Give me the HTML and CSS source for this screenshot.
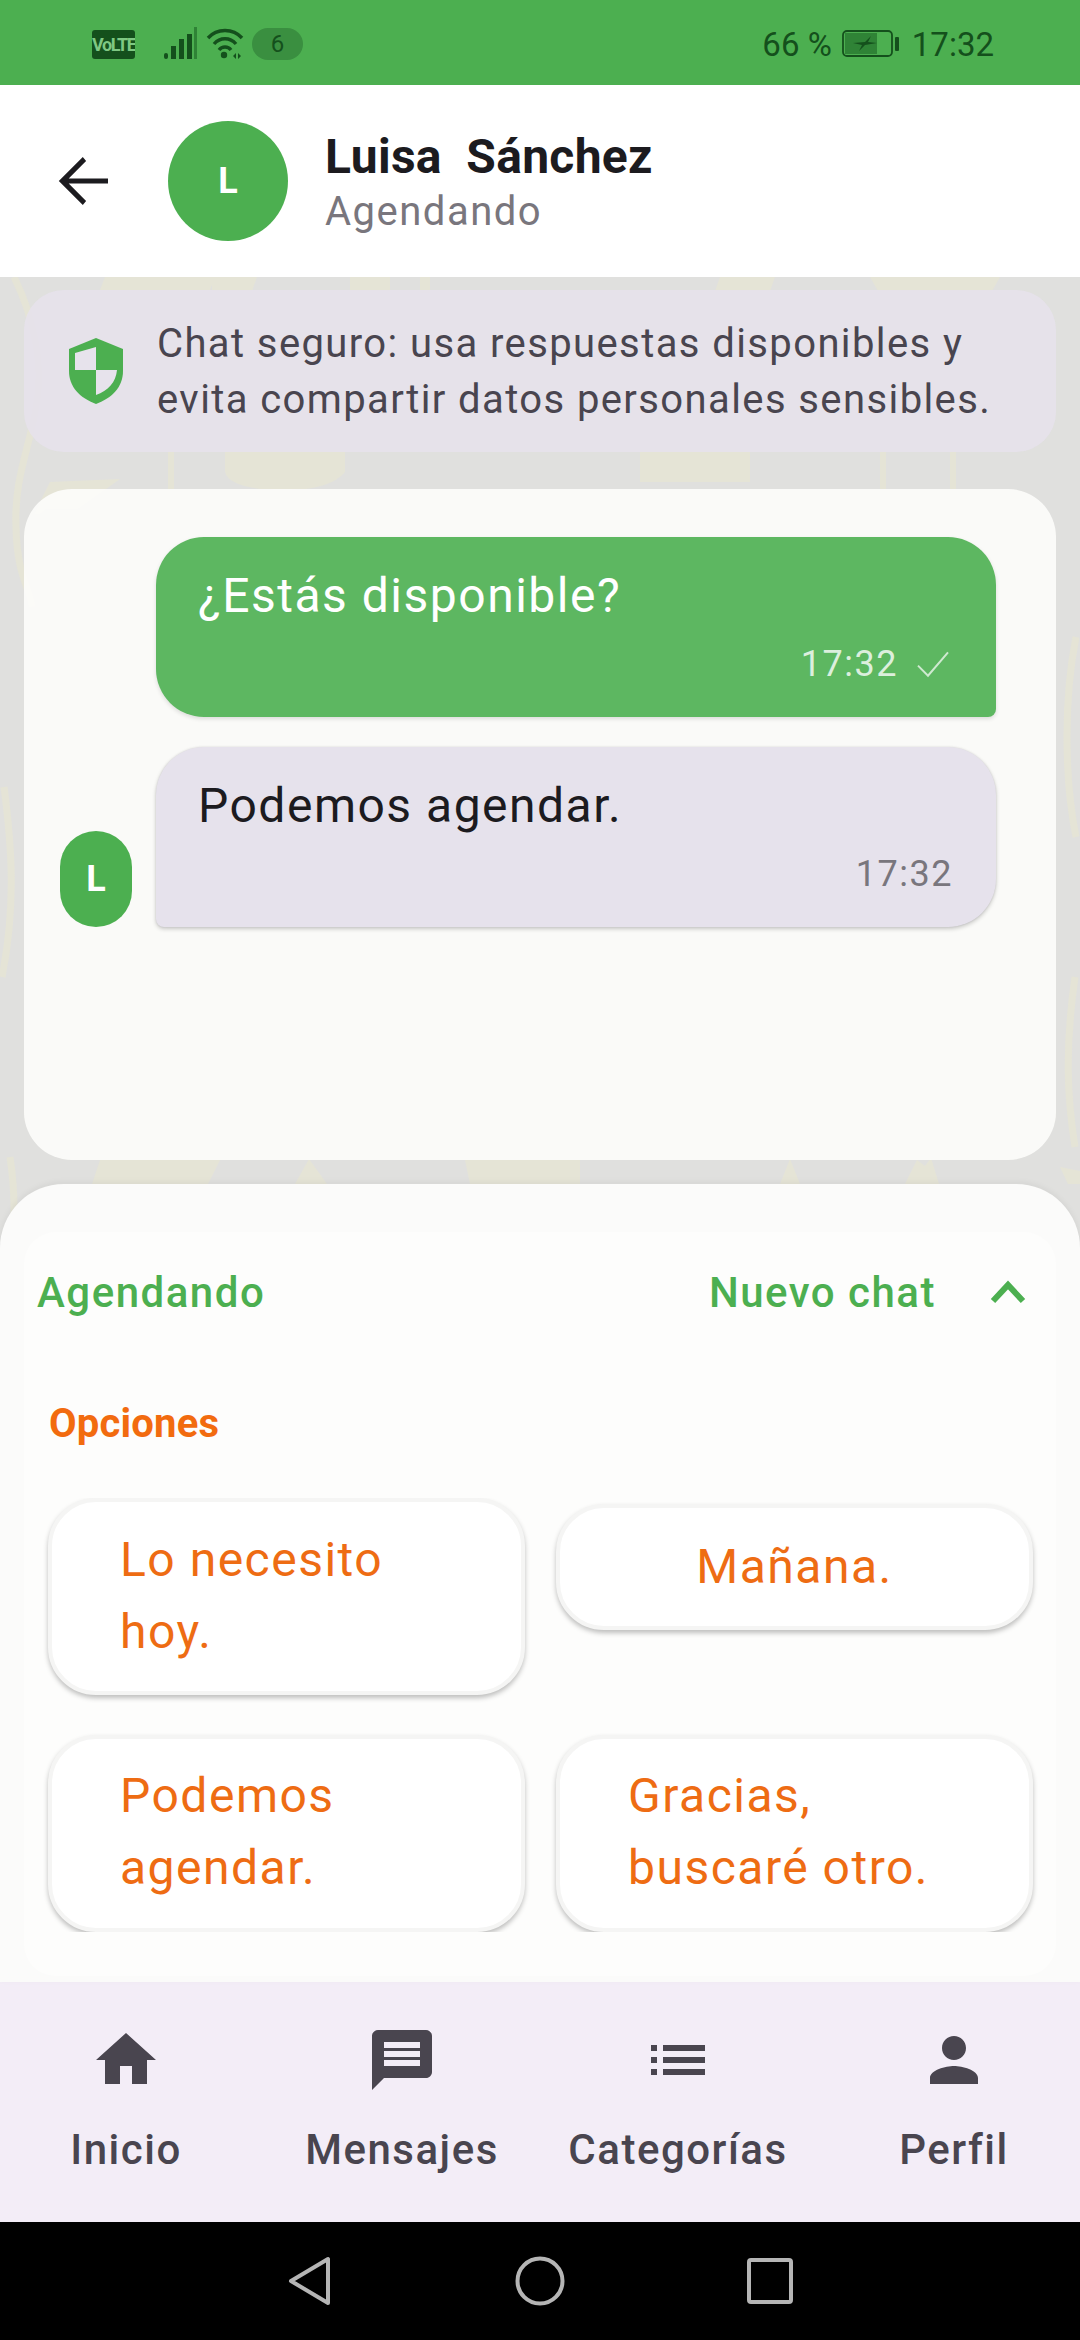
FILE: index.html
```html
<!DOCTYPE html>
<html lang="es">
<head>
<meta charset="utf-8">
<title>Chat</title>
<link rel="stylesheet" href="styles.css">
</head>
<body>
<div class="screen">
  <div class="status">
    <div class="status-left">
      <span class="volte">VoLTE</span>
      <svg class="sig" viewBox="0 0 36 34" width="36" height="34"><g fill="#14501c"><rect x="1" y="26" width="4" height="6" rx="2"/><rect x="8" y="19" width="5" height="13"/><rect x="16" y="12" width="5" height="20"/><rect x="24" y="7" width="5" height="25"/></g><rect x="31" y="0" width="3" height="32" fill="#2f8336"/></svg>
      <svg class="wifi" viewBox="0 0 38 34" width="38" height="34"><g fill="none" stroke="#14501c" stroke-width="3.4"><path d="M2 11C11 1 27 1 36 11"/><path d="M8 17C14 10 24 10 30 17"/><path d="M13 23C16 19 22 19 25 23"/></g><circle cx="18" cy="28" r="3.2" fill="#14501c"/><path d="M27 29l3-3v6zM32 26l3 3-3 3z" fill="#14501c"/></svg>
      <span class="count">6</span>
    </div>
    <div class="status-right">
      <span>66 %</span>
      <svg class="batt" viewBox="0 0 58 28" width="58" height="28"><rect x="1" y="1" width="49" height="25" rx="4" fill="none" stroke="#14501c" stroke-width="1.8"/><rect x="3" y="3" width="32" height="21" fill="#2f8336"/><path d="M11 13l12-1 6-6-3 6 9 1-12 2-6 6 3-6z" fill="#14501c"/><rect x="53" y="7" width="4" height="14" rx="1" fill="#14501c"/></svg>
      <span>17:32</span>
    </div>
  </div>

  <header class="top">
    <svg class="back" viewBox="0 0 24 24" width="72" height="72"><path d="M20 11.200H6.900l5.800-5.900L11.600 4l-8 8 8 8 1.100-1.300-5.800-5.900H20z" fill="#1c1b1f"/></svg>
    <div class="avatar">L</div>
    <div class="who">
      <div class="name">Luisa&nbsp; Sánchez</div>
      <div class="state">Agendando</div>
    </div>
  </header>

  <main class="main">
    <svg class="doodles" viewBox="0 0 1080 1705" width="1080" height="1705" aria-hidden="true">
      <g fill="#e5e4d6">
        <path d="M105 0h110l-5 13H100zM172 0h10v13h-10zM212 0h45l-5 14h-40zM350 0h40v14h-40zM420 0h10v16h-10z"/>
        <path d="M720 0h55l-5 14h-55zM1000 0h-130l8 14h114z"/>
        <path d="M50 205l70-3-42 30H46l-6 5h-6zM168 175h6v37h-6zM225 175h120v20c-10 12-30 18-60 18-45 0-60-10-60-20z"/>
        <path d="M640 175h110v30H640zM880 175h6v37h-6zM950 175h6v37h-6z"/>
        <path d="M100 883h120l-12 24H92zM295 907l14-25 18 25zM465 883h115v24H470zM780 907l10-25 10 25zM905 907l12-24 8 6 6-8 8 26zM1060 890l20 4v13h-12z"/>
      </g>
      <g fill="none" stroke="#e5e4d6" stroke-width="7">
        <path d="M14 0c20 40 30 90 22 130-6 40-22 70-20 120 1 50 14 60 16 80"/>
        <path d="M2 700c14-70 10-130 2-190M6 1000c10-40 10-80 4-120"/>
        <path d="M1076 360c-12 60-12 140 0 200M1075 700c-10 70-8 120 0 170"/>
      </g>
    </svg>

    <div class="notice">
      <svg class="shield" viewBox="0 0 56 66" width="56" height="66"><path d="M28 0l27 11v22c0 16-11 27-27 33C12 60 1 49 1 33V11z" fill="#4caf50"/><path d="M28 9v23H7V15zM28 32h21c-1 12-9 21-21 25z" fill="#e7e3ec"/></svg>
      <p class="notice-text">Chat seguro: usa respuestas disponibles y evita compartir datos personales sensibles.</p>
    </div>

    <section class="chat">
      <div class="bubble mine">
        <div class="msg">¿Estás disponible?</div>
        <div class="meta"><span>17:32</span><svg viewBox="0 0 24 24" width="40" height="40"><path d="M3 13l6 6L21 5" fill="none" stroke="#cfe9d0" stroke-width="1.2"/></svg></div>
      </div>
      <div class="row-in">
        <div class="mini">L</div>
        <div class="bubble theirs">
          <div class="msg">Podemos agendar.</div>
          <div class="meta"><span>17:32</span></div>
        </div>
      </div>
    </section>

    <section class="sheet">
      <div class="panel">
        <div class="panel-head">
          <span>Agendando</span>
          <span class="new">Nuevo chat</span>
          <svg class="chev" viewBox="0 0 36 24" width="36" height="24"><path d="M3 21L18 5l15 16" fill="none" stroke="#4caf50" stroke-width="6"/></svg>
        </div>
        <div class="opt-title">Opciones</div>
        <div class="options">
          <button class="opt">Lo necesito hoy.</button>
          <button class="opt short">Mañana.</button>
          <button class="opt">Podemos agendar.</button>
          <button class="opt">Gracias, buscaré otro.</button>
        </div>
      </div>
    </section>
  </main>

  <nav class="nav">
    <div class="tab">
      <svg viewBox="0 0 24 24" width="72" height="72"><path d="M10 20v-6h4v6h5v-8h3L12 3 2 12h3v8z" fill="#49454f"/></svg>
      <span>Inicio</span>
    </div>
    <div class="tab">
      <svg viewBox="0 0 24 24" width="72" height="72"><path d="M20 2H4c-1.100 0-2 .9-2 2v18l4-4h14c1.100 0 2-.9 2-2V4c0-1.100-.9-2-2-2zM18 14H6v-2h12zm0-3H6V9h12zm0-3H6V6h12z" fill="#49454f"/></svg>
      <span>Mensajes</span>
    </div>
    <div class="tab">
      <svg viewBox="0 0 24 24" width="72" height="72"><path d="M3 7h2v2H3zm0 4h2v2H3zm0 4h2v2H3zM7 7h14v2H7zm0 4h14v2H7zm0 4h14v2H7z" fill="#49454f"/></svg>
      <span>Categorías</span>
    </div>
    <div class="tab">
      <svg viewBox="0 0 24 24" width="72" height="72"><path d="M12 12c2.200 0 4-1.800 4-4s-1.800-4-4-4-4 1.800-4 4 1.800 4 4 4zm0 2c-2.700 0-8 1.300-8 4v2h16v-2c0-2.700-5.300-4-8-4z" fill="#49454f"/></svg>
      <span>Perfil</span>
    </div>
  </nav>

  <div class="sysbar">
    <svg viewBox="0 0 46 50" width="46" height="50"><path d="M41 3v44L4 25z" fill="none" stroke="#b5b5b5" stroke-width="4" stroke-linejoin="round"/></svg>
    <svg viewBox="0 0 50 50" width="50" height="50"><circle cx="25" cy="25" r="22.500" fill="none" stroke="#b5b5b5" stroke-width="4"/></svg>
    <svg viewBox="0 0 46 46" width="46" height="46"><rect x="2" y="2" width="42" height="42" rx="2" fill="none" stroke="#b5b5b5" stroke-width="4"/></svg>
  </div>
</div>
</body>
</html>
```
FILE: styles.css
```css
* { box-sizing: border-box; }
html, body { margin: 0; padding: 0; }
body { width: 1080px; height: 2340px; overflow: hidden; font-family: Roboto, "Noto Sans", sans-serif; }
.screen { width: 1080px; height: 2340px; display: flex; flex-direction: column; overflow: hidden; }

.status { height: 85px; flex: none; background: #4caf50; display: flex; justify-content: space-between; align-items: center; padding: 3px 86px 0 92px; color: #14501c; font-size: 33px; }
.status-left, .status-right { display: flex; align-items: center; }
.volte { width: 43px; height: 29px; background: #14501c; color: #7fc883; border-radius: 3px; font-size: 18px; font-weight: 700; line-height: 29px; text-align: center; letter-spacing: -1.4px; margin-right: 28px; white-space: nowrap; overflow: hidden; }
.sig { margin-right: 7px; }
.wifi { margin-right: 8px; }
.count { width: 51px; height: 32px; border-radius: 16px; background: #3a8f40; font-size: 24px; line-height: 32px; text-align: center; }
.batt { margin: 0 12px 0 10px; }

.top { height: 192px; flex: none; background: #fff; display: flex; align-items: center; padding-left: 48px; }
.back { margin-right: 48px; }
.avatar { width: 120px; height: 120px; border-radius: 50%; background: #4caf50; color: #fff; display: flex; align-items: center; justify-content: center; font-size: 36px; font-weight: 700; margin-right: 37px; }
.who { display: flex; flex-direction: column; margin-top: 6px; }
.name { font-size: 48px; font-weight: 700; line-height: 56px; letter-spacing: .3px; color: #1c1b1f; }
.state { font-size: 40px; line-height: 54px; color: #79767d; letter-spacing: 1.5px; }

.main { position: relative; flex: none; height: 1705px; background: #e0e0de; padding-top: 13px; display: flex; flex-direction: column; }
.doodles { position: absolute; left: 0; top: 0; }

.notice { position: relative; height: 162px; margin: 0 24px; border-radius: 40px; background: rgba(230, 225, 236, 0.88); display: flex; align-items: center; padding-left: 44px; gap: 33px; flex: none; }
.shield { flex: none; }
.notice-text { margin: 2px 0 0; width: 860px; font-size: 40px; line-height: 56px; letter-spacing: 1.4px; color: #49454f; }

.chat { position: relative; flex: none; height: 671px; margin: 37px 24px 0; border-radius: 48px; background: rgba(251, 251, 249, 0.97); padding: 48px 60px 0 36px; display: flex; flex-direction: column; align-items: flex-end; gap: 30px; }
.bubble { width: 840px; height: 180px; padding: 31px 43px 0 42px; display: flex; flex-direction: column; }
.mine { background: #5db761; color: #fff; border-radius: 48px 48px 8px 48px; box-shadow: 0 2px 4px rgba(0,0,0,.12); }
.theirs { background: #e6e2ec; color: #1c1b1f; border-radius: 48px 48px 48px 8px; box-shadow: 0 0 2px rgba(0,0,0,.1), 0 2px 4px rgba(0,0,0,.2); }
.msg { font-size: 48px; line-height: 56px; letter-spacing: 1.5px; }
.meta { margin-top: 18px; display: flex; justify-content: flex-end; align-items: center; gap: 15px; font-size: 36px; line-height: 44px; letter-spacing: 1.5px; }
.mine .meta { color: #dcefdd; }
.theirs .meta { color: #79767d; }
.row-in { display: flex; align-items: flex-end; gap: 24px; }
.mini { width: 72px; height: 96px; border-radius: 36px; background: #4caf50; color: #fff; font-size: 36px; font-weight: 700; display: flex; align-items: center; justify-content: center; }

.sheet { position: relative; flex: none; height: 798px; margin-top: 24px; border-radius: 64px 64px 0 0; background: #fbfbfa; padding: 48px 24px 6px; box-shadow: 0 -2px 6px rgba(0,0,0,.05); }
.panel { height: 744px; border-radius: 32px; background: #fdfdfc; display: flex; flex-direction: column; }
.panel-head { height: 120px; flex: none; display: flex; align-items: center; padding: 0 30px 0 13px; color: #4caf50; font-size: 42px; font-weight: 500; letter-spacing: 1.5px; }
.new { margin-left: auto; margin-right: 54px; }
.opt-title { flex: none; height: 60px; margin-top: 42px; padding-left: 25px; color: #f26b0f; font-size: 40px; font-weight: 700; line-height: 60px; letter-spacing: .2px; }
.options { margin-top: 44px; height: 434px; overflow: hidden; display: grid; grid-template-columns: 477px 477px; column-gap: 31px; row-gap: 39px; padding: 0 0 0 24px; align-items: start; }
.opt { border: 4px solid #f5f5f4; height: 197px; border-radius: 48px; background: #fff; padding: 0 68px 2px; text-align: left; font: 400 48px/72px Roboto, sans-serif; letter-spacing: 1.5px; color: #ee6c13; box-shadow: 0 3px 5px rgba(0,0,0,.25); }
.short { height: 126px; margin-top: 6px; text-align: center; padding: 0; }

.nav { height: 240px; flex: none; background: #f3edf7; display: grid; grid-template-columns: repeat(4, 276px); justify-content: center; }
.tab { display: flex; flex-direction: column; align-items: center; padding-top: 42px; color: #49454f; font-size: 42px; letter-spacing: 1.5px; font-weight: 500; }
.tab svg { display: block; }
.tab span { margin-top: 30px; line-height: 48px; }

.sysbar { flex: 1; background: #000; display: flex; align-items: center; justify-content: center; gap: 182px; }
```
